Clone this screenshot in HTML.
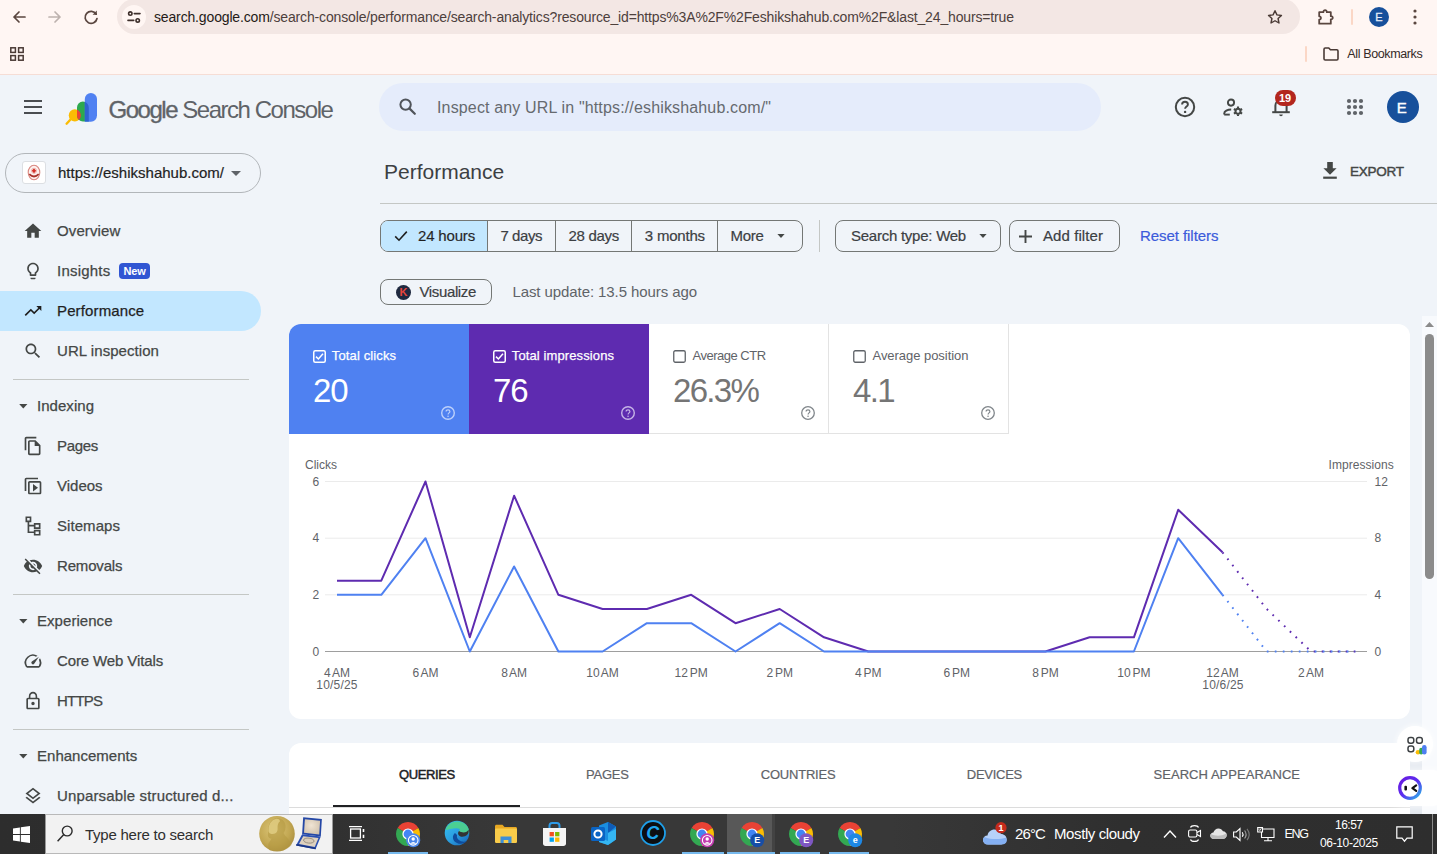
<!DOCTYPE html>
<html>
<head>
<meta charset="utf-8">
<title>Performance</title>
<style>
*{box-sizing:border-box;margin:0;padding:0}
html,body{width:1437px;height:854px;overflow:hidden;background:#f0f4f9;font-family:"Liberation Sans",sans-serif;color:#1f1f1f}
.abs{position:absolute}
.t{position:absolute;white-space:nowrap;line-height:1}
svg{position:absolute;overflow:visible}
/* browser chrome */
#chrome{left:0;top:0;width:1437px;height:75px;background:#fff6f3;border-bottom:1px solid #f6ddd5}
#urlbar{left:117px;top:-1px;width:1182.500px;height:35px;border-radius:17.500px;background:#f3e7e4}
#siteinfo{left:122px;top:5px;width:24px;height:24px;border-radius:12px;background:#fff6f3}
/* app */
#search{left:379px;top:83px;width:722px;height:48px;border-radius:24px;background:#e5ecfb}
#prop{left:5px;top:153px;width:256px;height:40px;border-radius:20px;border:1px solid #b2b6ba}
#navsel{left:0;top:291px;width:261px;height:40px;border-radius:0 20px 20px 0;background:#c2e7ff}
.nav{font-size:15px;color:#444746;left:57px;-webkit-text-stroke:.25px #444746}
.sec{font-size:15px;color:#444746;left:37px;-webkit-text-stroke:.25px #444746}
.hr{left:13px;width:236px;height:1px;background:#c4c7c5}
.card{background:#fff;border-radius:12px}
.chip{font-size:15px;color:#3c4043;-webkit-text-stroke:.2px #3c4043}
.mlab{font-size:13px}
.mval{font-size:33px}
.ax{font-size:12px;color:#5f6368}
.tab{font-size:13px;color:#5f6368;-webkit-text-stroke:.2px #5f6368}
/* taskbar */
#taskbar{left:0;top:814px;width:1437px;height:40px;background:linear-gradient(90deg,#2d2d2d 0%,#2f2f2f 20%,#383838 35%,#383838 62%,#2f2f2f 78%,#2e2e2e 100%)}
.ul{top:851.500px;height:2.500px;background:#76b9ed}
</style>
</head>
<body>
<!-- ===== BROWSER CHROME ===== -->
<div id="chrome" class="abs"></div>
<div id="urlbar" class="abs"></div>
<div id="siteinfo" class="abs"></div>
<!-- back / fwd / reload -->
<svg style="left:11px;top:9px" width="16" height="16" viewBox="0 0 16 16"><path d="M14 8H3M8 3L3 8l5 5" fill="none" stroke="#5a463f" stroke-width="1.7" stroke-linecap="round" stroke-linejoin="round"/></svg>
<svg style="left:47px;top:9px" width="16" height="16" viewBox="0 0 16 16"><path d="M2 8h11M8 3l5 5-5 5" fill="none" stroke="#bdb2ae" stroke-width="1.7" stroke-linecap="round" stroke-linejoin="round"/></svg>
<svg style="left:83px;top:9px" width="16" height="16" viewBox="0 0 16 16"><path d="M13.2 5.2A6 6 0 1 0 14 9.5" fill="none" stroke="#5a463f" stroke-width="1.7" stroke-linecap="round"/><path d="M13.8 1.6v4.2H9.6z" fill="#5a463f"/></svg>
<!-- site info (tune) -->
<svg style="left:126px;top:9px" width="16" height="16" viewBox="0 0 16 16"><g fill="none" stroke="#3d2f2b" stroke-width="1.6" stroke-linecap="round"><circle cx="4.3" cy="4.6" r="1.7"/><path d="M8.3 4.6H14"/><circle cx="11.7" cy="11.4" r="1.7"/><path d="M2 11.4h5.7"/></g></svg>
<div class="t" style="left:154px;top:10px;font-size:14px;color:#241a17;letter-spacing:-0.15px">search.google.com<span style="color:#4d403c">/search-console/performance/search-analytics?resource_id=https%3A%2F%2Feshikshahub.com%2F&amp;last_24_hours=true</span></div>
<!-- star -->
<svg style="left:1266px;top:8px" width="18" height="18" viewBox="0 0 24 24"><path d="M12 3.6l2.6 5.6 6 .7-4.5 4.1 1.2 6-5.3-3-5.3 3 1.2-6L3.4 9.9l6-.7z" fill="none" stroke="#4a3a35" stroke-width="1.9" stroke-linejoin="round"/></svg>
<!-- extensions puzzle -->
<svg style="left:1317px;top:8px" width="18" height="18" viewBox="0 0 18 18"><path d="M2.2 4.2h4.2c-.2-2.6 3.6-2.6 3.4 0h4v4c2.6-.2 2.6 3.4 0 3.2v4.3H2.2v-4.1c2.3.1 2.3-3.4 0-3.3z" fill="none" stroke="#5a463f" stroke-width="1.8" stroke-linejoin="round"/></svg>
<div class="abs" style="left:1351px;top:9px;width:2px;height:16px;background:#fbd7c6;border-radius:1px"></div>
<div class="abs" style="left:1369px;top:7px;width:20px;height:20px;border-radius:10px;background:#17509b"></div>
<div class="t" style="left:1375.300px;top:11.800px;font-size:11px;color:#e6edf8;-webkit-text-stroke:.3px #e6edf8">E</div>
<svg style="left:1413px;top:9px" width="4" height="16" viewBox="0 0 4 16"><g fill="#5a463f"><circle cx="2" cy="2" r="1.6"/><circle cx="2" cy="8" r="1.6"/><circle cx="2" cy="14" r="1.6"/></g></svg>
<!-- bookmarks bar -->
<svg style="left:10px;top:47px" width="14" height="14" viewBox="0 0 14 14"><g fill="none" stroke="#4a3a35" stroke-width="1.5"><rect x=".8" y=".8" width="4.6" height="4.6"/><rect x="8.6" y=".8" width="4.6" height="4.6"/><rect x=".8" y="8.6" width="4.6" height="4.6"/><rect x="8.6" y="8.6" width="4.6" height="4.6"/></g></svg>
<div class="abs" style="left:1305px;top:46px;width:2px;height:16px;background:#fbd7c6;border-radius:1px"></div>
<svg style="left:1323px;top:47px" width="16" height="14" viewBox="0 0 16 14"><path d="M1 2.2c0-.7.5-1.2 1.2-1.2h3.6l1.6 1.8h6.4c.7 0 1.2.5 1.2 1.2v7.8c0 .7-.5 1.2-1.2 1.2H2.2c-.7 0-1.2-.5-1.2-1.2z" fill="none" stroke="#4a3a35" stroke-width="1.6" stroke-linejoin="round"/></svg>
<div class="t" style="left:1347.300px;top:48px;font-size:12.5px;color:#352a27;letter-spacing:-0.37px">All Bookmarks</div>

<!-- ===== APP HEADER ===== -->
<div id="search" class="abs"></div>
<!-- hamburger -->
<div class="abs" style="left:24px;top:100px;width:18px;height:2px;background:#4a4d51"></div>
<div class="abs" style="left:24px;top:106px;width:18px;height:2px;background:#4a4d51"></div>
<div class="abs" style="left:24px;top:112px;width:18px;height:2px;background:#4a4d51"></div>
<!-- GSC logo -->
<svg style="left:64px;top:92px" width="34" height="34" viewBox="64 92 34 34">
 <defs><clipPath id="cg"><path d="M77 107.500a5.900 5.900 0 0 1 11.800 0V121.600H82.900a5.900 5.900 0 0 1-5.900-5.900z"/></clipPath></defs>
 <path d="M71 119L66.600 123.700" stroke="#fbbc04" stroke-width="2.400" stroke-linecap="round"/>
 <circle cx="74.800" cy="115.400" r="6.050" fill="#fbbc04"/>
 <path d="M77 107.500a5.900 5.900 0 0 1 11.800 0V121.600H82.900a5.900 5.900 0 0 1-5.900-5.900z" fill="#2da94f"/>
 <circle cx="74.800" cy="115.400" r="6.050" fill="#ea4335" clip-path="url(#cg)"/>
 <path d="M84.800 99a6.100 6.100 0 0 1 12.200 0v16.600a6.100 6.100 0 0 1-6.100 6.100H84.800z" fill="#5081f2"/>
 <path d="M84.800 99a6.100 6.100 0 0 1 12.200 0v16.600a6.100 6.100 0 0 1-6.100 6.100H84.800z" fill="#2f63d0" clip-path="url(#cg)"/>
</svg>
<div class="t" style="left:108.5px;top:98.3px;font-size:24px;color:#5f6368;letter-spacing:-1.47px"><span style="-webkit-text-stroke:0.35px #5f6368">Google</span> Search Console</div>
<!-- search icon -->
<svg style="left:398px;top:97px" width="20" height="20" viewBox="0 0 20 20"><circle cx="7.6" cy="7.6" r="5.2" fill="none" stroke="#50545a" stroke-width="2"/><path d="M11.6 11.6l5.2 5.2" stroke="#50545a" stroke-width="2.2" stroke-linecap="round"/></svg>
<div class="t" style="left:437px;top:99.700px;font-size:16px;color:#666a6f;letter-spacing:.15px">Inspect any URL in "https://eshikshahub.com/"</div>
<!-- help -->
<svg style="left:1174px;top:96px" width="22" height="22" viewBox="0 0 22 22"><circle cx="11" cy="11" r="9.2" fill="none" stroke="#444746" stroke-width="2"/><path d="M8.1 8.6c0-1.7 1.3-2.8 2.9-2.8s2.9 1.1 2.9 2.6c0 2-2.8 2.3-2.8 4.4" fill="none" stroke="#444746" stroke-width="1.9"/><circle cx="11.1" cy="15.9" r="1.2" fill="#444746"/></svg>
<!-- manage users -->
<svg style="left:1222px;top:97px" width="22" height="20" viewBox="0 0 22 20"><circle cx="9" cy="5.6" r="3.1" fill="none" stroke="#444746" stroke-width="1.9"/><path d="M2.2 17.6v-1.2c0-2.3 3.3-3.9 7-3.9" fill="none" stroke="#444746" stroke-width="1.9"/><path d="M2.2 17.6h5.6" stroke="#444746" stroke-width="1.9"/><circle cx="16" cy="14.3" r="2.5" fill="none" stroke="#444746" stroke-width="2"/><g stroke="#444746" stroke-width="2.1"><path d="M16 9.6v1.8M16 17.2v1.8M11.9 12l1.6.9M18.5 15.7l1.6.9M11.9 16.6l1.6-.9M18.5 12.9l1.6-.9"/></g></svg>
<!-- bell -->
<svg style="left:1272px;top:97px" width="18" height="20" viewBox="0 0 18 20"><path d="M3.4 15V8.6c0-3.2 2.4-5.6 5.6-5.6s5.6 2.4 5.6 5.6V15" fill="none" stroke="#444746" stroke-width="2"/><path d="M1.2 15.2h15.6" stroke="#444746" stroke-width="2" stroke-linecap="square"/><path d="M7.2 17.4h3.6a1.8 1.8 0 0 1-3.6 0z" fill="#444746"/></svg>
<div class="abs" style="left:1275px;top:90px;width:21px;height:16px;border-radius:8px;background:#b3261e"></div>
<div class="t" style="left:1279px;top:92.5px;font-size:11px;font-weight:700;color:#fff;letter-spacing:-0.2px">19</div>
<!-- apps -->
<svg style="left:1346px;top:98px" width="18" height="18" viewBox="0 0 18 18"><g fill="#5f6368"><circle cx="3" cy="3" r="2.1"/><circle cx="9" cy="3" r="2.1"/><circle cx="15" cy="3" r="2.1"/><circle cx="3" cy="9" r="2.1"/><circle cx="9" cy="9" r="2.1"/><circle cx="15" cy="9" r="2.1"/><circle cx="3" cy="15" r="2.1"/><circle cx="9" cy="15" r="2.1"/><circle cx="15" cy="15" r="2.1"/></g></svg>
<!-- avatar -->
<div class="abs" style="left:1387px;top:91px;width:32px;height:32px;border-radius:16px;background:#17509b"></div>
<div class="t" style="left:1396.800px;top:100.200px;font-size:15px;color:#fff;-webkit-text-stroke:.4px #fff">E</div>

<!-- ===== SIDEBAR ===== -->
<div id="prop" class="abs"></div>
<div class="abs" style="left:22px;top:161px;width:24px;height:23px;border:1px solid #dcdfe3;border-radius:3px;background:#fff"></div>
<svg style="left:26px;top:163px" width="16" height="19" viewBox="0 0 16 19"><ellipse cx="8" cy="9.500" rx="5.800" ry="7.300" fill="#fdf1ef" stroke="#d98880" stroke-width="1.100"/><path d="M8 5.200l2.200 2.600L8 10.400 5.800 7.800z" fill="#d62f27"/><circle cx="8" cy="7.800" r="2.600" fill="none" stroke="#e9a9a3" stroke-width=".8"/><path d="M3.300 11.200q4.700 4.600 9.400 0" fill="none" stroke="#a8322a" stroke-width="1.700"/></svg>
<div class="t" style="left:58px;top:165px;font-size:15px;color:#1f1f1f;-webkit-text-stroke:.2px #1f1f1f">https://eshikshahub.com/</div>
<svg style="left:231px;top:171px" width="10" height="5" viewBox="0 0 10 5"><path d="M0 0h10L5 5z" fill="#5f6368"/></svg>
<div id="navsel" class="abs"></div>
<svg style="left:23.0px;top:221.0px" width="20" height="20" viewBox="0 0 24 24" fill="#444746"><path d="M10 20v-6h4v6h5v-8h3L12 3 2 12h3v8z"/></svg>
<div class="t nav" style="top:223px;letter-spacing:0.12px">Overview</div>
<svg style="left:23.0px;top:261.0px" width="20" height="20" viewBox="0 0 24 24" fill="#444746"><path d="M9 21c0 .55.45 1 1 1h4c.55 0 1-.45 1-1v-1H9v1zm3-19C8.14 2 5 5.14 5 9c0 2.38 1.19 4.47 3 5.74V17c0 .55.45 1 1 1h6c.55 0 1-.45 1-1v-2.26c1.81-1.27 3-3.36 3-5.74 0-3.86-3.14-7-7-7zm2.85 11.1l-.85.6V16h-4v-2.3l-.85-.6C7.8 12.16 7 10.63 7 9c0-2.76 2.24-5 5-5s5 2.24 5 5c0 1.63-.8 3.16-2.15 4.1z"/></svg>
<div class="t nav" style="top:263px;letter-spacing:0.21px">Insights</div>
<div class="abs" style="left:119px;top:263px;width:31px;height:16px;border-radius:4px;background:#3156d3"></div>
<div class="t" style="left:123.5px;top:265.5px;font-size:11px;font-weight:700;color:#fff;letter-spacing:-0.1px">New</div>
<svg style="left:23.0px;top:301.0px" width="20" height="20" viewBox="0 0 24 24" fill="#1f1f1f"><path d="M16 6l2.29 2.29-4.88 4.88-4-4L2 16.59 3.41 18l6-6 4 4 6.3-6.29L22 12V6z"/></svg>
<div class="t nav" style="top:303px;letter-spacing:0.13px;color:#1f1f1f;-webkit-text-stroke:.25px #1f1f1f">Performance</div>
<svg style="left:23.0px;top:341.0px" width="20" height="20" viewBox="0 0 24 24" fill="#444746"><path d="M15.5 14h-.79l-.28-.27C15.41 12.59 16 11.11 16 9.5 16 5.91 13.09 3 9.5 3S3 5.91 3 9.5 5.91 16 9.5 16c1.61 0 3.09-.59 4.23-1.57l.27.28v.79l5 4.99L20.49 19l-4.99-5zm-6 0C7.01 14 5 11.99 5 9.5S7.01 5 9.5 5 14 7.01 14 9.5 11.99 14 9.5 14z"/></svg>
<div class="t nav" style="top:343px;letter-spacing:0.06px">URL inspection</div>
<div class="abs hr" style="top:379px"></div>
<svg style="left:18.800px;top:403.8px" width="8.600" height="4.600" viewBox="0 0 9 5"><path d="M0 0h9L4.5 5z" fill="#444746"/></svg>
<div class="t sec" style="top:398px;letter-spacing:0.04px">Indexing</div>
<svg style="left:23.0px;top:436.0px" width="20" height="20" viewBox="0 0 24 24" fill="#444746"><path d="M16 1H4c-1.1 0-2 .9-2 2v14h2V3h12V1zm-1 4H8c-1.1 0-1.99.9-1.99 2L6 21c0 1.1.89 2 1.99 2H19c1.1 0 2-.9 2-2V11l-6-6zM8 21V7h6v5h5v9H8z"/></svg>
<div class="t nav" style="top:438px;letter-spacing:-0.3px">Pages</div>
<svg style="left:23.0px;top:476.0px" width="20" height="20" viewBox="0 0 24 24" fill="#444746"><path transform="translate(0,24) scale(1,-1)" d="M4 6H2v14c0 1.1.9 2 2 2h14v-2H4V6zm16-4H8c-1.1 0-2 .9-2 2v12c0 1.1.9 2 2 2h12c1.1 0 2-.9 2-2V4c0-1.1-.9-2-2-2zm0 14H8V4h12v12zM12 5.5v9l6-4.5z"/></svg>
<div class="t nav" style="top:478px;letter-spacing:0px">Videos</div>
<svg style="left:23.0px;top:516.0px" width="20" height="20" viewBox="0 0 24 24" fill="#444746"><path d="M3 2h7v7H7.5v3H13v-2h8v7h-8v-3H7.500v6H13v-2h8v7h-8v-3H5.5V9H3V2zm2 2v3h3V4H5zm10 8v3h4v-3h-4zm0 8v3h4v-3h-4z" transform="translate(0,-1.5)"/></svg>
<div class="t nav" style="top:518px;letter-spacing:0.06px">Sitemaps</div>
<svg style="left:23.0px;top:556.0px" width="20" height="20" viewBox="0 0 24 24" fill="#444746"><path d="M12 7c2.76 0 5 2.24 5 5 0 .65-.13 1.26-.36 1.83l2.92 2.92c1.51-1.26 2.7-2.89 3.43-4.75-1.73-4.39-6-7.5-11-7.5-1.4 0-2.74.25-3.98.7l2.16 2.16C10.740 7.13 11.35 7 12 7zM2 4.27l2.28 2.28.46.46C3.08 8.3 1.78 10.02 1 12c1.730 4.39 6 7.500 11 7.500 1.55 0 3.03-.3 4.38-.84l.42.42L19.730 22 21 20.730 3.270 3 2 4.270zM7.530 9.800l1.55 1.55c-.05.21-.08.43-.08.65 0 1.66 1.34 3 3 3 .22 0 .44-.03.65-.08l1.55 1.55c-.67.33-1.41.53-2.2.53-2.76 0-5-2.24-5-5 0-.79.2-1.53.53-2.2zm4.310-.78l3.150 3.150.02-.16c0-1.66-1.34-3-3-3l-.17.010z"/></svg>
<div class="t nav" style="top:558px;letter-spacing:-0.17px">Removals</div>
<div class="abs hr" style="top:594px"></div>
<svg style="left:18.800px;top:618.8px" width="8.600" height="4.600" viewBox="0 0 9 5"><path d="M0 0h9L4.5 5z" fill="#444746"/></svg>
<div class="t sec" style="top:613px;letter-spacing:0.05px">Experience</div>
<svg style="left:23.0px;top:651.0px" width="20" height="20" viewBox="0 0 24 24" fill="#444746"><path d="M20.38 8.57l-1.23 1.85a8 8 0 0 1-.22 7.58H5.070A8 8 0 0 1 15.58 6.850l1.850-1.230A10 10 0 0 0 3.350 19a2 2 0 0 0 1.720 1h13.850a2 2 0 0 0 1.740-1 10 10 0 0 0-.27-10.440zm-9.790 6.840a2 2 0 0 0 2.830 0l5.660-8.490-8.490 5.660a2 2 0 0 0 0 2.830z"/></svg>
<div class="t nav" style="top:653px;letter-spacing:-0.12px">Core Web Vitals</div>
<svg style="left:23.0px;top:691.0px" width="20" height="20" viewBox="0 0 24 24" fill="#444746"><path d="M12 17c1.100 0 2-.9 2-2s-.9-2-2-2-2 .9-2 2 .9 2 2 2zm6-9h-1V6c0-2.760-2.240-5-5-5S7 3.240 7 6v2H6c-1.100 0-2 .9-2 2v10c0 1.100.9 2 2 2h12c1.100 0 2-.9 2-2V10c0-1.100-.9-2-2-2zM8.900 6c0-1.710 1.390-3.100 3.100-3.100s3.100 1.390 3.100 3.100v2H8.900V6zM18 20H6V10h12v10z"/></svg>
<div class="t nav" style="top:693px;letter-spacing:-0.8px">HTTPS</div>
<div class="abs hr" style="top:729px"></div>
<svg style="left:18.800px;top:753.8px" width="8.600" height="4.600" viewBox="0 0 9 5"><path d="M0 0h9L4.5 5z" fill="#444746"/></svg>
<div class="t sec" style="top:748px;letter-spacing:0.02px">Enhancements</div>
<svg style="left:23.0px;top:786.0px" width="20" height="20" viewBox="0 0 24 24" fill="#444746"><path d="M11.990 18.540l-7.370-5.730L3 14.070l9 7 9-7-1.630-1.270-7.380 5.740zM12 16l7.360-5.730L21 9l-9-7-9 7 1.630 1.270L12 16zm0-11.470L17.740 9 12 13.470 6.260 9 12 4.530z"/></svg>
<div class="t nav" style="top:788px;letter-spacing:0.15px">Unparsable structured d...</div>

<!-- ===== MAIN ===== -->
<div class="t" style="left:384px;top:161px;font-size:21px;color:#3c4043">Performance</div>
<svg style="left:1322px;top:162px" width="16" height="17" viewBox="0 0 16 17"><path d="M5.2 0h5.6v6.2H14.600L8 12.800 1.400 6.200H5.200z" fill="#444746"/><rect x="1.2" y="14.600" width="13.600" height="2.200" fill="#444746"/></svg>
<div class="t" style="left:1350px;top:164.500px;font-size:13.500px;color:#444746;letter-spacing:-.25px;-webkit-text-stroke:.45px #444746">EXPORT</div>
<div class="abs" style="left:380px;top:203px;width:1057px;height:1px;background:#c4c7c5"></div>

<!-- segmented date control -->
<div class="abs" style="left:380px;top:220px;width:423px;height:32px;border:1px solid #747775;border-radius:8px;overflow:hidden">
 <div class="abs" style="left:0;top:0;width:106px;height:30px;background:#c2e7ff"></div>
 <div class="abs" style="left:106px;top:0;width:1px;height:30px;background:#747775"></div>
 <div class="abs" style="left:174px;top:0;width:1px;height:30px;background:#747775"></div>
 <div class="abs" style="left:250px;top:0;width:1px;height:30px;background:#747775"></div>
 <div class="abs" style="left:336px;top:0;width:1px;height:30px;background:#747775"></div>
</div>
<svg style="left:394px;top:230px" width="14" height="12" viewBox="0 0 14 12"><path d="M1.200 6.400l3.800 3.800 7.800-8.600" fill="none" stroke="#1f1f1f" stroke-width="1.600"/></svg>
<div class="t chip" style="left:418px;top:227.700px;letter-spacing:-.17px;color:#1f1f1f">24 hours</div>
<div class="t chip" style="left:500.500px;top:227.700px;letter-spacing:-.45px">7 days</div>
<div class="t chip" style="left:568.500px;top:227.700px;letter-spacing:-.29px">28 days</div>
<div class="t chip" style="left:644.800px;top:227.700px;letter-spacing:-.21px">3 months</div>
<div class="t chip" style="left:730.500px;top:227.700px;letter-spacing:-.3px">More</div>
<svg style="left:776.500px;top:234.200px" width="8" height="4" viewBox="0 0 9 5"><path d="M0 0h9L4.500 5z" fill="#444746"/></svg>
<div class="abs" style="left:819px;top:220px;width:1px;height:32px;background:#c4c7c5"></div>
<div class="abs" style="left:835px;top:220px;width:166px;height:32px;border:1px solid #747775;border-radius:8px"></div>
<div class="t chip" style="left:851px;top:227.700px;letter-spacing:-.25px">Search type: Web</div>
<svg style="left:979px;top:234.200px" width="8" height="4" viewBox="0 0 9 5"><path d="M0 0h9L4.500 5z" fill="#444746"/></svg>
<div class="abs" style="left:1009px;top:220px;width:111px;height:32px;border:1px solid #747775;border-radius:8px"></div>
<svg style="left:1018.500px;top:229.500px" width="13" height="13" viewBox="0 0 13 13"><path d="M6.500 0v13M0 6.500h13" stroke="#444746" stroke-width="1.900"/></svg>
<div class="t chip" style="left:1043px;top:227.700px;letter-spacing:.08px">Add filter</div>
<div class="t" style="left:1140px;top:227.700px;font-size:15px;color:#3b5bdb;letter-spacing:-.06px;-webkit-text-stroke:.2px #3b5bdb">Reset filters</div>

<!-- visualize row -->
<div class="abs" style="left:380px;top:279px;width:112px;height:26px;border:1px solid #747775;border-radius:8px"></div>
<div class="abs" style="left:395.500px;top:284.500px;width:15px;height:15px;border-radius:8px;background:#1f2940"></div>
<div class="t" style="left:399.500px;top:286.500px;font-size:11px;font-weight:700;color:#e8453c">K</div>
<div class="t chip" style="left:419.400px;top:283.800px;letter-spacing:-.35px">Visualize</div>
<div class="t" style="left:512.400px;top:283.800px;font-size:15px;color:#5f6368;letter-spacing:-.08px">Last update: 13.5 hours ago</div>

<!-- card 1 -->
<div class="abs card" id="card1" style="left:289px;top:324px;width:1121px;height:394.700px;overflow:hidden">
 <div class="abs" style="left:0;top:0;width:180px;height:110px;background:#4f81f1"></div>
 <div class="abs" style="left:180px;top:0;width:180px;height:110px;background:#5e2bb0"></div>
 <div class="abs" style="left:539px;top:0;width:1px;height:110px;background:#e3e3e3"></div>
 <div class="abs" style="left:719px;top:0;width:1px;height:110px;background:#e3e3e3"></div>
 <div class="abs" style="left:360px;top:109px;width:360px;height:1px;background:#e3e3e3"></div>
</div>
<!-- tile 1 -->
<svg style="left:313px;top:350px" width="13" height="13" viewBox="0 0 13 13"><rect x=".750" y=".750" width="11.500" height="11.500" rx="1.500" fill="none" stroke="#fff" stroke-width="1.500"/><path d="M3 6.600l2.400 2.400 4.600-5.200" fill="none" stroke="#fff" stroke-width="1.500"/></svg>
<div class="t mlab" style="left:331.800px;top:348.500px;color:#fff;letter-spacing:.13px;-webkit-text-stroke:.25px #fff">Total clicks</div>
<div class="t mval" style="left:313px;top:373.500px;color:#fff;letter-spacing:-1.100px">20</div>
<svg class="hq" style="left:441px;top:406px" width="14" height="14" viewBox="0 0 14 14"><circle cx="7" cy="7" r="6.300" fill="none" stroke="#bcd0fb" stroke-width="1.400"/><path d="M5.100 5.600c0-1.100.8-1.800 1.900-1.800s1.900.7 1.900 1.700c0 1.300-1.800 1.500-1.800 2.900" fill="none" stroke="#bcd0fb" stroke-width="1.200"/><circle cx="7.050" cy="10.300" r=".8" fill="#bcd0fb"/></svg>
<!-- tile 2 -->
<svg style="left:493px;top:350px" width="13" height="13" viewBox="0 0 13 13"><rect x=".750" y=".750" width="11.500" height="11.500" rx="1.500" fill="none" stroke="#fff" stroke-width="1.500"/><path d="M3 6.600l2.400 2.400 4.600-5.200" fill="none" stroke="#fff" stroke-width="1.500"/></svg>
<div class="t mlab" style="left:511.800px;top:348.500px;color:#fff;letter-spacing:.11px;-webkit-text-stroke:.25px #fff">Total impressions</div>
<div class="t mval" style="left:493px;top:373.500px;color:#fff;letter-spacing:-1.100px">76</div>
<svg class="hq" style="left:621px;top:406px" width="14" height="14" viewBox="0 0 14 14"><circle cx="7" cy="7" r="6.300" fill="none" stroke="#c5b3e6" stroke-width="1.400"/><path d="M5.100 5.600c0-1.100.8-1.800 1.900-1.800s1.900.7 1.900 1.700c0 1.300-1.800 1.500-1.800 2.900" fill="none" stroke="#c5b3e6" stroke-width="1.200"/><circle cx="7.050" cy="10.300" r=".8" fill="#c5b3e6"/></svg>
<!-- tile 3 -->
<svg style="left:673px;top:350px" width="13" height="13" viewBox="0 0 13 13"><rect x=".750" y=".750" width="11.500" height="11.500" rx="1.500" fill="none" stroke="#5f6368" stroke-width="1.300"/></svg>
<div class="t mlab" style="left:692.500px;top:348.500px;color:#5f6368;letter-spacing:-.5px;font-size:13px">Average CTR</div>
<div class="t mval" style="left:673px;top:373.500px;color:#757575;letter-spacing:-1.700px">26.3%</div>
<svg class="hq" style="left:801px;top:406px" width="14" height="14" viewBox="0 0 14 14"><circle cx="7" cy="7" r="6.300" fill="none" stroke="#80868b" stroke-width="1.300"/><path d="M5.100 5.600c0-1.100.8-1.800 1.900-1.800s1.900.7 1.900 1.700c0 1.300-1.800 1.500-1.800 2.900" fill="none" stroke="#80868b" stroke-width="1.200"/><circle cx="7.050" cy="10.300" r=".8" fill="#80868b"/></svg>
<!-- tile 4 -->
<svg style="left:853px;top:350px" width="13" height="13" viewBox="0 0 13 13"><rect x=".750" y=".750" width="11.500" height="11.500" rx="1.500" fill="none" stroke="#5f6368" stroke-width="1.300"/></svg>
<div class="t mlab" style="left:872.500px;top:348.500px;color:#5f6368;letter-spacing:-.04px">Average position</div>
<div class="t mval" style="left:853px;top:373.500px;color:#757575;letter-spacing:-1.600px">4.1</div>
<svg class="hq" style="left:981px;top:406px" width="14" height="14" viewBox="0 0 14 14"><circle cx="7" cy="7" r="6.300" fill="none" stroke="#80868b" stroke-width="1.300"/><path d="M5.100 5.600c0-1.100.8-1.800 1.900-1.800s1.900.7 1.900 1.700c0 1.300-1.800 1.500-1.800 2.900" fill="none" stroke="#80868b" stroke-width="1.200"/><circle cx="7.050" cy="10.300" r=".8" fill="#80868b"/></svg>

<!-- chart -->
<svg style="left:0;top:0" width="1437" height="854" viewBox="0 0 1437 854">
<rect x="325" y="594.3" width="1042" height="1" fill="#ebebeb"/>
<rect x="325" y="537.7" width="1042" height="1" fill="#ebebeb"/>
<rect x="325" y="481.0" width="1042" height="1" fill="#ebebeb"/>
<rect x="325" y="651.0" width="1042" height="1" fill="#9e9e9e"/>
<polyline points="337.0,580.7 381.3,580.7 425.5,481.5 469.8,637.3 514.1,495.7 558.4,594.8 602.6,609.0 646.9,609.0 691.2,594.8 735.5,623.2 779.7,609.0 824.0,637.3 868.3,651.5 912.5,651.5 956.8,651.5 1001.1,651.5 1045.4,651.5 1089.6,637.3 1133.9,637.3 1178.2,509.8 1222.5,552.3" fill="none" stroke="#5e2bb0" stroke-width="2" stroke-linejoin="round"/>
<polyline points="1222.5,552.3 1266.7,609.0 1311.0,651.5 1355.3,651.5" fill="none" stroke="#5e2bb0" stroke-width="2" stroke-dasharray="1.700 6.300"/>
<polyline points="337.0,594.8 381.3,594.8 425.5,538.2 469.8,651.5 514.1,566.5 558.4,651.5 602.6,651.5 646.9,623.2 691.2,623.2 735.5,651.5 779.7,623.2 824.0,651.5 868.3,651.5 912.5,651.5 956.8,651.5 1001.1,651.5 1045.4,651.5 1089.6,651.5 1133.9,651.5 1178.2,538.2 1222.5,594.8" fill="none" stroke="#4f81f1" stroke-width="2" stroke-linejoin="round"/>
<polyline points="1222.5,594.8 1266.7,651.5 1311.0,651.5 1355.3,651.5" fill="none" stroke="#4f81f1" stroke-width="2" stroke-dasharray="1.700 6.300"/>
</svg>
<div class="t ax" style="left:305px;top:459px">Clicks</div>
<div class="t ax" style="left:1328.500px;top:459px;letter-spacing:.05px">Impressions</div>
<div class="t ax" style="left:312.500px;top:645.5px">0</div>
<div class="t ax" style="left:1374.500px;top:645.5px">0</div>
<div class="t ax" style="left:312.500px;top:588.8px">2</div>
<div class="t ax" style="left:1374.500px;top:588.8px">4</div>
<div class="t ax" style="left:312.500px;top:532.2px">4</div>
<div class="t ax" style="left:1374.500px;top:532.2px">8</div>
<div class="t ax" style="left:312.500px;top:475.5px">6</div>
<div class="t ax" style="left:1374.500px;top:475.5px">12</div>
<div class="t ax" style="left:307.0px;width:60px;text-align:center;top:667px;word-spacing:-1.500px">4 AM</div>
<div class="t ax" style="left:395.5px;width:60px;text-align:center;top:667px;word-spacing:-1.500px">6 AM</div>
<div class="t ax" style="left:484.1px;width:60px;text-align:center;top:667px;word-spacing:-1.500px">8 AM</div>
<div class="t ax" style="left:572.6px;width:60px;text-align:center;top:667px;word-spacing:-1.500px">10 AM</div>
<div class="t ax" style="left:661.2px;width:60px;text-align:center;top:667px;word-spacing:-1.500px">12 PM</div>
<div class="t ax" style="left:749.7px;width:60px;text-align:center;top:667px;word-spacing:-1.500px">2 PM</div>
<div class="t ax" style="left:838.3px;width:60px;text-align:center;top:667px;word-spacing:-1.500px">4 PM</div>
<div class="t ax" style="left:926.8px;width:60px;text-align:center;top:667px;word-spacing:-1.500px">6 PM</div>
<div class="t ax" style="left:1015.4px;width:60px;text-align:center;top:667px;word-spacing:-1.500px">8 PM</div>
<div class="t ax" style="left:1103.9px;width:60px;text-align:center;top:667px;word-spacing:-1.500px">10 PM</div>
<div class="t ax" style="left:1192.5px;width:60px;text-align:center;top:667px;word-spacing:-1.500px">12 AM</div>
<div class="t ax" style="left:1281.0px;width:60px;text-align:center;top:667px;word-spacing:-1.500px">2 AM</div>
<div class="t ax" style="left:307px;width:60px;text-align:center;top:679px;letter-spacing:.2px">10/5/25</div>
<div class="t ax" style="left:1193px;width:60px;text-align:center;top:679px;letter-spacing:.2px">10/6/25</div>


<!-- card 2 -->
<div class="abs card" id="card2" style="left:289px;top:743px;width:1121px;height:120px"></div>
<div class="abs" style="left:289px;top:807px;width:1121px;height:1px;background:#dcdcdc"></div>
<div class="abs" style="left:333px;top:805px;width:187px;height:2px;background:#202124"></div>
<div class="t tab" style="left:399px;top:767.800px;color:#202124;-webkit-text-stroke:.5px #202124;letter-spacing:-.4px">QUERIES</div>
<div class="t tab" style="left:586px;top:767.800px;letter-spacing:-.25px">PAGES</div>
<div class="t tab" style="left:760.700px;top:767.800px;letter-spacing:-.2px">COUNTRIES</div>
<div class="t tab" style="left:966.800px;top:767.800px;letter-spacing:-.27px">DEVICES</div>
<div class="t tab" style="left:1153.600px;top:767.800px;letter-spacing:.03px">SEARCH APPEARANCE</div>
<!-- scrollbar -->
<div class="abs" style="left:1422px;top:316px;width:15px;height:498px;background:#f8fafd"></div>
<svg style="left:1425px;top:322px" width="9" height="5" viewBox="0 0 9 5"><path d="M0 5h9L4.500 0z" fill="#8b8b8b"/></svg>
<div class="abs" style="left:1425px;top:334px;width:9px;height:245px;border-radius:4.500px;background:#8b8b8b"></div>
<!-- floating side buttons -->
<div class="abs" style="left:1410px;top:746px;width:12px;height:68px;background:#e3e8ef"></div>
<div class="abs" style="left:1397px;top:726px;width:36px;height:36px;border-radius:18px;background:#fff;box-shadow:0 0 6px rgba(255,255,255,.9)"></div>
<svg style="left:1406px;top:736px" width="22" height="20" viewBox="1406 736 22 20"><g fill="none" stroke="#3c4043" stroke-width="1.500"><rect x="1408" y="737.500" width="5.800" height="5.800" rx="2.200"/><rect x="1416.500" y="737.500" width="5.800" height="5.800" rx="2.200"/><rect x="1408" y="746" width="5.800" height="5.800" rx="2.200"/></g><circle cx="1418" cy="752.300" r="2.300" fill="#fbbc04"/><rect x="1419.200" y="747.800" width="4" height="6.800" rx="2" fill="#34a853"/><rect x="1422" y="745" width="4.600" height="9.600" rx="2.300" fill="#4e7ff1"/></svg>
<div class="abs" style="left:1389px;top:770px;width:60px;height:36px;border-radius:18px;background:#fff;box-shadow:0 0 8px rgba(255,255,255,.9)"></div>
<svg style="left:1397px;top:775px" width="26" height="26" viewBox="-13 -13 26 26"><defs><linearGradient id="owl" x1="0" y1="0" x2="1" y2="1"><stop offset="0" stop-color="#6a1be0"/><stop offset=".5" stop-color="#5b2df0"/><stop offset="1" stop-color="#2ab7e8"/></linearGradient></defs><circle r="10.300" fill="#fff" stroke="url(#owl)" stroke-width="3.200"/><rect x="-5.600" y="-2.300" width="2.600" height="4.800" rx="1" fill="#111"/><path d="M6.200 -2.600L2.400 .1 6.200 2.800" fill="none" stroke="#111" stroke-width="2.200" stroke-linecap="round" stroke-linejoin="round"/></svg>
<!-- ===== TASKBAR ===== -->
<div id="taskbar" class="abs"></div>
<!-- windows logo -->
<svg style="left:12.500px;top:825.500px" width="17" height="17" viewBox="0 0 17 17"><path d="M0 2.400L6.900 1.450V8H0zM7.800 1.300L17 0v8H7.800zM0 8.900h6.900v6.600L0 14.550zM7.800 8.900H17V17l-9.200-1.300z" fill="#fff"/></svg>
<!-- search box -->
<div class="abs" style="left:45px;top:814px;width:288px;height:40px;background:#f2f2f2;border:1px solid #b9b9b9;border-left-color:#9a9a9a;border-right-color:#9a9a9a"></div>
<svg style="left:56px;top:824px" width="20" height="20" viewBox="0 0 20 20"><circle cx="11.200" cy="7" r="4.900" fill="none" stroke="#2b2b2b" stroke-width="1.400"/><path d="M7.800 10.600L1.600 17.200" stroke="#2b2b2b" stroke-width="1.500"/></svg>
<div class="t" style="left:85px;top:826.500px;font-size:15px;color:#2f2f2f;letter-spacing:-.24px">Type here to search</div>
<!-- medal -->
<svg style="left:258px;top:815px" width="68" height="38" viewBox="258 815 68 38">
 <defs><radialGradient id="gold" cx=".42" cy=".38" r=".68"><stop offset="0" stop-color="#dcc678"/><stop offset=".65" stop-color="#c2a752"/><stop offset="1" stop-color="#a88c3e"/></radialGradient>
 <radialGradient id="beige" cx=".45" cy=".4" r=".7"><stop offset="0" stop-color="#f0e4d4"/><stop offset="1" stop-color="#cfc0ab"/></radialGradient></defs>
 <circle cx="277" cy="833.700" r="17.800" fill="url(#gold)"/>
 <path d="M268.300 829.500c0-5 2.500-9.300 6.200-10.700 4.500-1.600 10.300.8 11 6.600.4 3.300-.7 6-2 7.700l1.500 2.300c3.600 3.200 5.600 6.600 6.500 9.700-2.600 3-6 5-10 5.800l-12-.6c-1-2.600-1.400-4.600-1.200-6.600l3.300-5c-1.700-.3-3-1-3.500-2.300-.5-2 .3-4.300.2-6.900z" fill="#b3973f" opacity=".55"/>
 <path d="M268.600 829c.2-4.600 2.400-8.300 5.600-9.600 3-1.200 5.300-.4 5.800 1.800-2 1.500-2.600 4-2.400 7 .2 2.400-.8 4.600-2.600 5.400-2.300 1-5.500.4-6.200-1.600-.5-1.200 0-2-.2-3z" fill="#e2cf86" opacity=".8"/>
 <path d="M303.200 817.300l18.700 1.700-1.100 17.500-18.700-2.200z" fill="#2447a6"/>
 <path d="M304.900 819.300l15.200 1.400-.9 13.900-15.200-1.800z" fill="url(#beige)"/>
 <path d="M302.100 834.300l18.700 2.200-5.300 12.800-19.500-3.900z" fill="#2a4fb0"/>
 <path d="M296 845.400l19.500 3.900.3-1.500-19.300-3.800z" fill="#1b3684"/>
 <path d="M303.200 836.200l15.300 1.900-3.800 9-15.700-3.200z" fill="#dfd2bf"/>
 <ellipse cx="308.800" cy="840.600" rx="5.300" ry="2.500" fill="#d9ccb9" stroke="#8d8578" stroke-width=".8" transform="rotate(6 308.800 840.600)"/>
</svg>
<!-- task view -->
<svg style="left:348px;top:825px" width="18" height="17" viewBox="0 0 18 17"><g fill="none" stroke="#fff" stroke-width="1.300"><rect x="2.600" y="4" width="9.800" height="9"/><path d="M1 1.600h13M1 15.400h13"/><path d="M15.500 4v3M15.500 9.800v3.200" stroke-width="1.600"/></g></svg>
<svg style="left:394.0px;top:820px" width="30" height="30" viewBox="-14 -14 30 30"><path d="M0 0L-10.39,-6.00A12 12 0 0 1 10.39,-6.00Z" fill="#e94235"/><path d="M0 0L10.39,-6.00A12 12 0 0 1 0.00,12.00Z" fill="#fbbc04"/><path d="M0 0L0.00,12.00A12 12 0 0 1 -10.39,-6.00Z" fill="#33a852"/><circle r="5.600" fill="#fff"/><circle r="4.400" fill="#4285f4"/><circle cx="5.2" cy="6.3" r="7" fill="#4a86ea"/><circle cx="5.2" cy="6.3" r="4.800" fill="none" stroke="#fff" stroke-width="1.100"/><circle cx="5.2" cy="5.0" r="1.700" fill="#fff"/><path d="M2.0 9.7q3.200-3.400 6.400 0" fill="#fff"/></svg>
<div class="abs ul" style="left:388px;width:40px"></div>
<svg style="left:444px;top:820px" width="26" height="26" viewBox="-13 -13 26 26"><defs><linearGradient id="edg" x1="0" y1="0" x2="1" y2="1"><stop offset="0" stop-color="#35c1f1"/><stop offset=".5" stop-color="#2b9fe0"/><stop offset="1" stop-color="#1662b8"/></linearGradient></defs><circle r="12.300" fill="url(#edg)"/><path d="M-11.500-3C-9-11 1-14 8-9c4 3 5 8 3 10-3 3-9 2-9-2 0-2 1-3 1-3-5-2-11 1-14.500 1z" fill="#4fd38a" opacity=".9"/><path d="M-2 0c-3 2-3 8 2 10 4 2 8 0 10-2-5 2-11-1-10-6z" fill="#0f4c9c"/><path d="M2-2c-1 1-1.500 3 0 4.500 2 2 6 1.500 8.500-1 1-1 1.500-3 1-5-1 3-6 4-9.500 1.500z" fill="#333"/></svg>
<svg style="left:494px;top:823px" width="24" height="21" viewBox="0 0 24 21"><path d="M1 3.200c0-.9.600-1.500 1.500-1.500h6l2 2.300H21.500c.9 0 1.500.6 1.500 1.500v2H1z" fill="#e8a823"/><rect x="1" y="5.500" width="22" height="14.500" rx="1.200" fill="#f9cc4a"/><path d="M6.500 13.500h11v6.500h-3.200v-3h-4.600v3H6.500z" fill="#3e8fd8"/></svg>
<svg style="left:542px;top:821px" width="25" height="26" viewBox="0 0 25 26"><path d="M7.500 7V4.800C7.500 3 8.700 2 10.200 2h4.600c1.500 0 2.700 1 2.700 2.800V7" fill="none" stroke="#2f9be8" stroke-width="2"/><path d="M1 7h23v15.500c0 1.400-1 2.500-2.500 2.500h-18C2 25 1 23.900 1 22.500z" fill="#f4f4f4"/><rect x="7.600" y="11" width="4.300" height="4.300" fill="#f25022"/><rect x="13.100" y="11" width="4.300" height="4.300" fill="#7fba00"/><rect x="7.600" y="16.500" width="4.300" height="4.300" fill="#00a4ef"/><rect x="13.100" y="16.500" width="4.300" height="4.300" fill="#ffb900"/></svg>
<svg style="left:591px;top:821px" width="26" height="25" viewBox="0 0 26 25"><path d="M8 4.500L17 1l8 4.500v13L17 24l-9-3z" fill="#1a8ee0"/><path d="M17 1l8 4.500L17 12z" fill="#0f5cb8"/><path d="M17 12l8-4v10.500L17 24z" fill="#35b6f2"/><path d="M8 16l9 4v4l-9-3z" fill="#35b6f2"/><rect x="0" y="6" width="14" height="14" rx="1.500" fill="#0a64c4"/><circle cx="7" cy="13" r="3.600" fill="none" stroke="#fff" stroke-width="2"/></svg>
<svg style="left:640px;top:820px" width="26" height="26" viewBox="-13 -13 26 26"><circle r="12" fill="#0d0f12" stroke="#1e9fea" stroke-width="1.800"/><text x="-.300" y="6.400" font-family="Liberation Sans" font-size="18" font-weight="700" font-style="italic" fill="#1ea7f0" text-anchor="middle">C</text></svg>
<svg style="left:688.0px;top:820px" width="30" height="30" viewBox="-14 -14 30 30"><path d="M0 0L-10.39,-6.00A12 12 0 0 1 10.39,-6.00Z" fill="#e94235"/><path d="M0 0L10.39,-6.00A12 12 0 0 1 0.00,12.00Z" fill="#fbbc04"/><path d="M0 0L0.00,12.00A12 12 0 0 1 -10.39,-6.00Z" fill="#33a852"/><circle r="5.600" fill="#fff"/><circle r="4.400" fill="#4285f4"/><circle cx="5.2" cy="6.3" r="7" fill="#c23cb0"/><circle cx="5.2" cy="6.3" r="4.800" fill="none" stroke="#fff" stroke-width="1.100"/><circle cx="5.2" cy="5.0" r="1.700" fill="#fff"/><path d="M2.0 9.7q3.200-3.400 6.400 0" fill="#fff"/></svg>
<div class="abs ul" style="left:682px;width:42px"></div>
<div class="abs" style="left:727px;top:814px;width:45px;height:40px;background:#585858"></div>
<div class="abs" style="left:772px;top:814px;width:3px;height:40px;background:#434343"></div>
<svg style="left:737.5px;top:820px" width="30" height="30" viewBox="-14 -14 30 30"><path d="M0 0L-10.39,-6.00A12 12 0 0 1 10.39,-6.00Z" fill="#e94235"/><path d="M0 0L10.39,-6.00A12 12 0 0 1 0.00,12.00Z" fill="#fbbc04"/><path d="M0 0L0.00,12.00A12 12 0 0 1 -10.39,-6.00Z" fill="#33a852"/><circle r="5.600" fill="#fff"/><circle r="4.400" fill="#4285f4"/><circle cx="5.2" cy="6.3" r="7" fill="#174ea6"/><text x="5.2" y="9.4" font-family="Liberation Sans" font-size="9" font-weight="700" fill="#fff" text-anchor="middle">E</text></svg>
<div class="abs ul" style="left:727px;width:48px"></div>
<svg style="left:786.5px;top:820px" width="30" height="30" viewBox="-14 -14 30 30"><path d="M0 0L-10.39,-6.00A12 12 0 0 1 10.39,-6.00Z" fill="#e94235"/><path d="M0 0L10.39,-6.00A12 12 0 0 1 0.00,12.00Z" fill="#fbbc04"/><path d="M0 0L0.00,12.00A12 12 0 0 1 -10.39,-6.00Z" fill="#33a852"/><circle r="5.600" fill="#fff"/><circle r="4.400" fill="#4285f4"/><circle cx="5.2" cy="6.3" r="7" fill="#7e57c2"/><text x="5.2" y="9.4" font-family="Liberation Sans" font-size="9" font-weight="700" fill="#fff" text-anchor="middle">E</text></svg>
<div class="abs ul" style="left:780px;width:40px"></div>
<svg style="left:835.5px;top:820px" width="30" height="30" viewBox="-14 -14 30 30"><path d="M0 0L-10.39,-6.00A12 12 0 0 1 10.39,-6.00Z" fill="#e94235"/><path d="M0 0L10.39,-6.00A12 12 0 0 1 0.00,12.00Z" fill="#fbbc04"/><path d="M0 0L0.00,12.00A12 12 0 0 1 -10.39,-6.00Z" fill="#33a852"/><circle r="5.600" fill="#fff"/><circle r="4.400" fill="#4285f4"/><circle cx="5.2" cy="6.3" r="7" fill="#1e88e5"/><text x="5.2" y="9.4" font-family="Liberation Sans" font-size="9" font-weight="700" fill="#fff" text-anchor="middle">e</text></svg>
<div class="abs ul" style="left:829px;width:40px"></div>
<!-- weather -->
<svg style="left:982px;top:820px" width="28" height="26" viewBox="982 820 28 26"><path d="M988 844.500c-3 0-5-2-5-4.500s2-4.500 4.500-4.500c.5-3.500 3.500-6 7-6 3 0 5.500 1.800 6.500 4.500 3.200 0 5.700 2.300 5.700 5.300s-2.400 5.200-5.400 5.200z" fill="#b6d1f9"/><path d="M988 844.500c-3 0-5-2-5-4.500 0-1.200.5-2.300 1.300-3.100 6 2.500 15 3 21.500.8.600.8.900 1.800.9 2.900 0 2.800-2.400 3.900-5.400 3.900z" fill="#84b0f3"/><circle cx="1001" cy="827.700" r="5.600" fill="#c42b1c"/><text x="1001" y="831" font-family="Liberation Sans" font-size="9" font-weight="700" fill="#fff" text-anchor="middle">1</text></svg>
<div class="t" style="left:1015px;top:825.800px;font-size:15px;color:#fff;letter-spacing:-.9px">26°C</div>
<div class="t" style="left:1054px;top:825.800px;font-size:15px;color:#fff;letter-spacing:-.4px">Mostly cloudy</div>
<!-- tray -->
<svg style="left:1163px;top:829px" width="14" height="10" viewBox="0 0 14 10"><path d="M1 8.500l6-6.500 6 6.500" fill="none" stroke="#fff" stroke-width="1.400"/></svg>
<svg style="left:1188px;top:825px" width="14" height="17" viewBox="0 0 14 17"><g fill="none" stroke="#fff" stroke-width="1.100"><path d="M2.500 2.500C3 1 5 .600 6.500.600S10 1 10.500 2.500M2.500 14.500C3 16 5 16.400 6.500 16.400S10 16 10.500 14.500"/><rect x=".600" y="5" width="8.300" height="7" rx="1.500"/><path d="M9 7.500l3.500-2v6L9 9.500"/></g></svg>
<svg style="left:1210px;top:828px" width="17" height="11" viewBox="0 0 17 11"><path d="M4 11C1.800 11 .300 9.600.300 7.800S1.700 4.700 3.400 4.600C4 2.200 6 .500 8.500.500c2 0 3.700 1.100 4.500 2.800 2.100.1 3.700 1.700 3.700 3.800S15 11 12.900 11z" fill="#e6e6e6"/><path d="M4 11C1.800 11 .300 9.600.300 7.800c0-.6.200-1.200.5-1.700 4.500 2.300 10.500 2.300 15.500-.5.300.5.400 1 .4 1.600C16.700 9.300 15 11 12.900 11z" fill="#bdbdbd"/></svg>
<svg style="left:1233px;top:827px" width="18" height="15" viewBox="0 0 18 15"><g fill="none" stroke="#fff" stroke-width="1.100"><path d="M.600 5h2.700L7 1.500v12L3.300 10H.600z"/><path d="M9.300 5.300q1.500 2.200 0 4.400"/><path d="M11.600 3.500q3 4 0 8" opacity=".55"/><path d="M14 1.800q4.300 5.700 0 11.400" opacity=".35"/></g></svg>
<svg style="left:1257px;top:827px" width="18" height="15" viewBox="0 0 18 15"><g fill="none" stroke="#fff" stroke-width="1.100"><path d="M4.500 2h12.500v8.500H4.500zM7 13.700h8M11 10.500v3.200"/><path d="M.700.600h4.800v4.400H.700z" fill="#333"/><path d="M1.800 2.200l1 1.300 1.500-2" stroke-width=".9"/></g></svg>
<div class="t" style="left:1284.500px;top:827.500px;font-size:12.500px;color:#fff;letter-spacing:-1.300px">ENG</div>
<div class="t" style="left:1335px;top:819px;font-size:12px;color:#fff;letter-spacing:-.5px">16:57</div>
<div class="t" style="left:1320px;top:836.500px;font-size:12px;color:#fff;letter-spacing:-.36px">06-10-2025</div>
<svg style="left:1396px;top:826px" width="17" height="17" viewBox="0 0 17 17"><path d="M.800.800h15.400v11.400H11l-2.500 3-2.500-3H.800z" fill="none" stroke="#fff" stroke-width="1.200"/></svg>
<div class="abs" style="left:1432px;top:814px;width:1px;height:40px;background:#8a8a8a"></div>
</body>
</html>
